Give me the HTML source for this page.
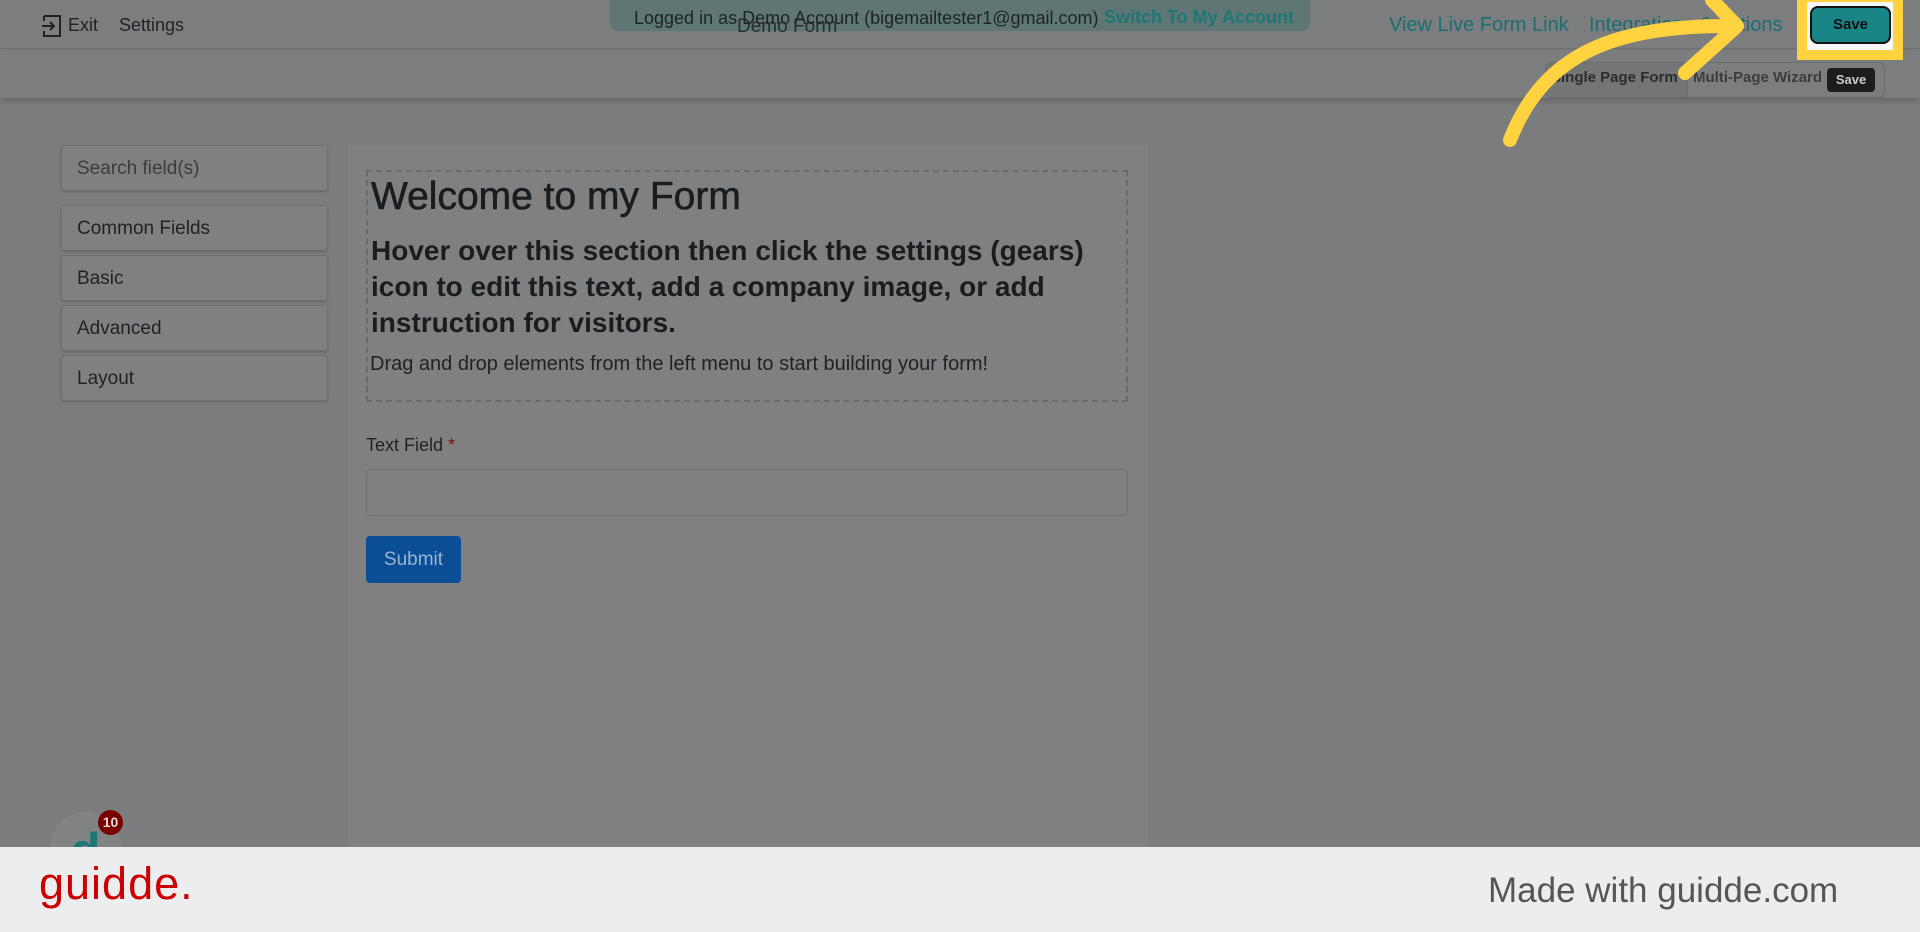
<!DOCTYPE html>
<html><head><meta charset="utf-8"><style>
*{margin:0;padding:0;box-sizing:border-box}
body{width:1920px;height:932px;overflow:hidden;background:#7b7c7e;font-family:"Liberation Sans",sans-serif;position:relative}
.abs{position:absolute}
.top{left:0;top:0;width:1920px;height:49px;background:#7c7d7f;border-bottom:1px solid #6f7072}
.bar2{left:0;top:50px;width:1920px;height:48px;background:#7c7d7f;box-shadow:0 3px 6px rgba(0,0,0,.18)}
.t{color:#1e2226;font-size:18px}
.side{left:61px;width:267px;height:46px;background:#808080;border:1px solid #6e6f71;border-radius:3px;box-shadow:0 1px 2px rgba(0,0,0,.2);font-size:19px;color:#1e2226;padding:12px 15px}
.panel{left:348px;top:145px;width:800px;height:702px;background:#808080}
</style></head><body>
<div class="abs top"></div>
<div class="abs bar2"></div>
<svg class="abs" style="left:40px;top:14px" width="24" height="24" viewBox="0 0 24 24" fill="none" stroke="#1e2226" stroke-width="2"><path d="M4 2h16v20H4v-5M4 7V2M2 12h12M10 8l4 4-4 4"/></svg>
<div class="abs t" style="left:68px;top:15px">Exit</div>
<div class="abs t" style="left:119px;top:15px">Settings</div>
<div class="abs" style="left:610px;top:0;width:700px;height:31px;background:#5f7674;border-radius:0 0 8px 8px"></div>
<div class="abs t" style="left:737px;top:16px;color:#2a2d30;font-size:19px">Demo Form</div>
<div class="abs t" style="left:634px;top:8px;font-size:18px">Logged in as Demo Account (bigemailtester1@gmail.com)</div>
<div class="abs" style="left:1104px;top:7px;font-size:18px;font-weight:bold;color:#1d7775">Switch To My Account</div>
<div class="abs" style="left:1389px;top:14px;font-size:20px;color:#1d6e70">View Live Form Link</div>
<div class="abs" style="left:1589px;top:14px;font-size:20px;color:#1d6e70">Integrations &amp; Actions</div>
<div class="abs" style="left:1545px;top:62px;width:340px;height:36px;border:1px solid #6a6b6d;border-radius:6px"></div>
<div class="abs" style="left:1545px;top:62px;width:143px;height:36px;background:#747577;border:1px solid #6a6b6d;border-radius:6px 0 0 6px"></div>
<div class="abs" style="left:1551px;top:69px;font-size:15px;font-weight:bold;color:#2a2d30">Single Page Form</div>
<div class="abs" style="left:1693px;top:69px;font-size:15px;font-weight:bold;color:#3a3d40">Multi-Page Wizard Form</div>
<div class="abs" style="left:1827px;top:68px;width:48px;height:24px;background:#1b1c1e;border-radius:4px;color:#ccc;font-size:13px;font-weight:bold;text-align:center;line-height:24px">Save</div>
<div class="abs" style="left:1797px;top:-8px;width:106px;height:68px;border:10px solid #ffd23f;background:#f5f6f8"></div>
<div class="abs" style="left:1810px;top:6px;width:81px;height:38px;background:#1a8586;border:2px solid #111;border-radius:8px;color:#111;font-weight:bold;font-size:15px;text-align:center;line-height:34px">Save</div>
<svg class="abs" style="left:0;top:0" width="1920" height="160"><path d="M1510 140 C1545 50 1620 25 1735 26" stroke="#ffd23f" stroke-width="14" fill="none" stroke-linecap="round"/><path d="M1712 0 L1737 26 L1685 73" stroke="#ffd23f" stroke-width="14" fill="none" stroke-linecap="round" stroke-linejoin="round"/></svg>
<div class="abs side" style="top:145px;color:#3a3d40">Search field(s)</div>
<div class="abs side" style="top:205px">Common Fields</div>
<div class="abs side" style="top:255px">Basic</div>
<div class="abs side" style="top:305px">Advanced</div>
<div class="abs side" style="top:355px">Layout</div>
<div class="abs panel"></div>
<div class="abs" style="left:366px;top:170px;width:762px;height:232px;border:2px dashed #6a6b6d"></div>
<div class="abs" style="left:371px;top:175px;font-size:39px;color:#1a1d20;-webkit-text-stroke:0.6px #1a1d20">Welcome to my Form</div>
<div class="abs" style="left:371px;top:233px;width:740px;font-size:28px;line-height:36px;font-weight:bold;color:#1a1d20">Hover over this section then click the settings (gears) icon to edit this text, add a company image, or add instruction for visitors.</div>
<div class="abs" style="left:370px;top:353px;font-size:20px;color:#1e2226">Drag and drop elements from the left menu to start building your form!</div>
<div class="abs" style="left:366px;top:435px;font-size:18px;color:#1e2226">Text Field <span style="color:#7a1010">*</span></div>
<div class="abs" style="left:366px;top:469px;width:762px;height:47px;border:1px solid #707173;border-radius:4px"></div>
<div class="abs" style="left:366px;top:536px;width:95px;height:47px;background:#0a4e98;border-radius:4px;color:#9fb3cc;font-size:19px;text-align:center;line-height:47px">Submit</div>
<div class="abs" style="left:50px;top:812px;width:72px;height:72px;border-radius:50%;background:#828385"></div>
<div class="abs" style="left:70px;top:822px;font-size:50px;color:#1d7775;font-weight:bold">d</div>
<div class="abs" style="left:98px;top:810px;width:25px;height:25px;border-radius:50%;background:#7a0000;color:#ddd;font-size:14px;font-weight:bold;text-align:center;line-height:25px">10</div>
<div class="abs" style="left:0;top:847px;width:1920px;height:85px;background:#ecedef"></div>
<div class="abs" style="left:39px;top:858px;font-size:45px;color:#cc0000;letter-spacing:1px">guidde.</div>
<div class="abs" style="left:1488px;top:871px;font-size:35px;color:#555">Made with guidde.com</div>
</body></html>
